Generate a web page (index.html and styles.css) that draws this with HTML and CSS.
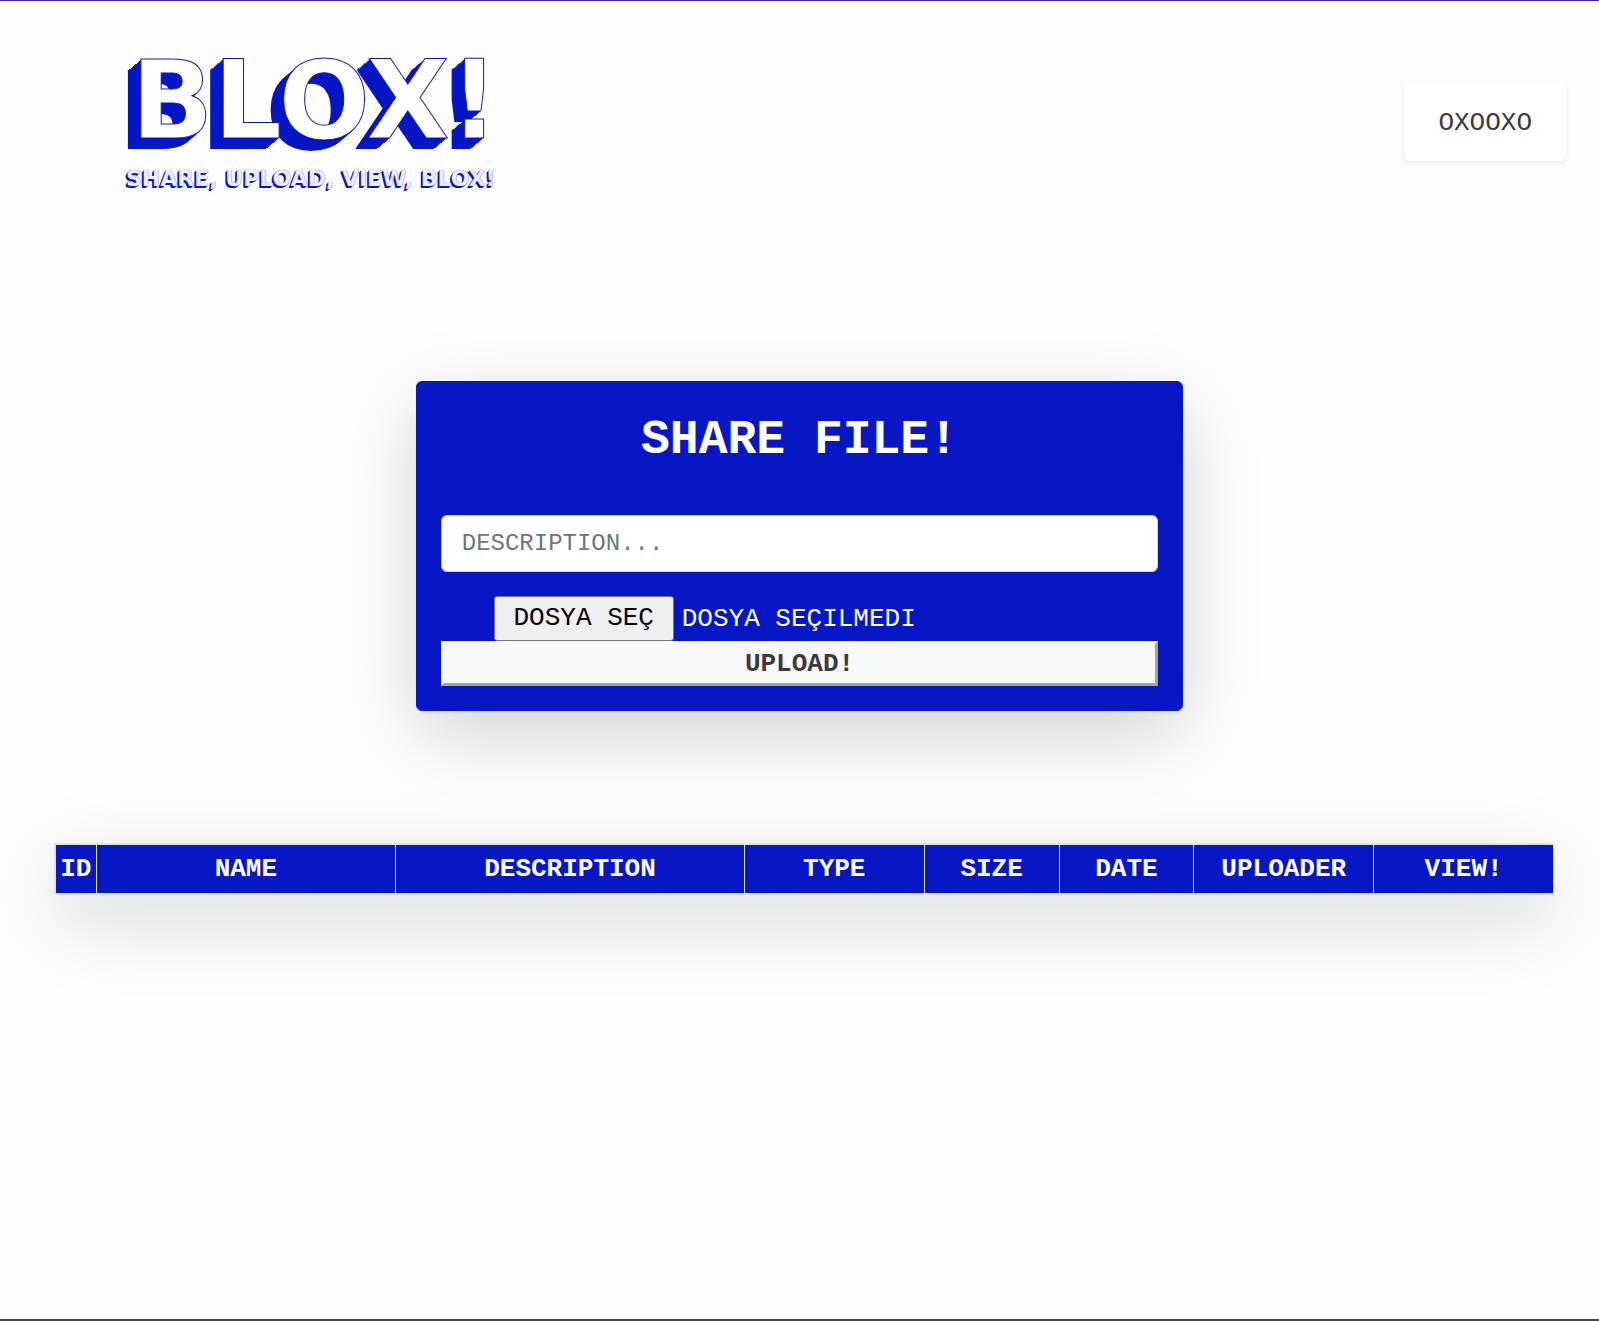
FILE: index.html
```html
<!DOCTYPE html>
<html lang="tr">
<head>
  <meta charset="utf-8">
  <meta name="viewport" content="width=device-width, initial-scale=1">
  <title>BLOX!</title>
  <link rel="stylesheet" href="styles.css">
</head>
<body>
  <header class="site-header">
    <a class="brand" href="#">
      <span class="brand-name">BLOX!</span>
      <span class="brand-tagline">SHARE, UPLOAD, VIEW, BLOX!</span>
    </a>
    <a class="user-card" href="#">OXOOXO</a>
  </header>

  <main>
    <form class="share-card">
      <h1 class="share-title">SHARE FILE!</h1>
      <input class="description" type="text" placeholder="DESCRIPTION..." aria-label="DESCRIPTION">
      <div class="file-row">
        <input class="file-input" type="file" id="file">
        <label class="file-button" for="file">DOSYA SEÇ</label>
        <span class="file-name">DOSYA SEÇILMEDI</span>
      </div>
      <button class="upload" type="submit">UPLOAD!</button>
    </form>

    <div class="files">
      <table class="files-table">
        <colgroup>
          <col class="col-id"><col class="col-name"><col class="col-description"><col class="col-medium">
          <col class="col-small"><col class="col-small"><col class="col-medium"><col class="col-medium">
        </colgroup>
        <thead>
          <tr>
            <th scope="col">ID</th>
            <th scope="col">NAME</th>
            <th scope="col">DESCRIPTION</th>
            <th scope="col">TYPE</th>
            <th scope="col">SIZE</th>
            <th scope="col">DATE</th>
            <th scope="col">UPLOADER</th>
            <th scope="col">VIEW!</th>
          </tr>
        </thead>
      </table>
    </div>
  </main>
</body>
</html>
```
FILE: styles.css
```css
:root {
  --blue: #0717c5;
  --ink: #3d3a3e;
  --line: #dee2e6;
  --deep-shadow: 0 24px 80px rgba(0, 0, 0, 0.175);
}

* {
  box-sizing: border-box;
}

body {
  margin: 0;
  min-height: 100vh;
  border-top: 1px solid #3a22a8;
  border-bottom: 2px solid #444;
  background: #fefefe;
  color: var(--ink);
  font: 26px/36px "Liberation Mono", monospace;
}

.site-header {
  display: flex;
  justify-content: space-between;
  align-items: center;
  padding: 50px 33px 46px 126px;
}

.brand {
  display: flex;
  flex-direction: column;
  gap: 16px;
  color: #fff;
  font-family: "DejaVu Sans", sans-serif;
  font-weight: 700;
  text-decoration: none;
  white-space: nowrap;
}

.brand-name {
  padding-left: 5px;
  font-size: 108px;
  line-height: 100px;
  -webkit-text-stroke: 1px var(--blue);
  text-shadow:
    -1px 1px var(--blue), -2px 2px var(--blue), -3px 3px var(--blue),
    -4px 4px var(--blue), -5px 5px var(--blue), -6px 5px var(--blue),
    -7px 6px var(--blue), -8px 7px var(--blue), -9px 8px var(--blue),
    -10px 9px var(--blue), -11px 10px var(--blue), -12px 10px var(--blue),
    -13px 11px var(--blue);
}

.brand-tagline {
  font-size: 22px;
  line-height: 24px;
  color: #eceefc;
  text-shadow: -1px 1px var(--blue), -2px 2px var(--blue), 0 0 1px var(--blue);
}

.user-card {
  padding: 24px 34px 20px;
  border-radius: 6px;
  background: #fff;
  box-shadow: 0 3px 6px rgba(0, 0, 0, 0.075);
  color: var(--ink);
  text-decoration: none;
}

.share-card {
  display: flex;
  flex-direction: column;
  width: 48%;
  margin: 144px auto 132px;
  padding: 28px 24px 24px;
  border: 1px solid var(--blue);
  border-radius: 6px;
  background: var(--blue);
  box-shadow: var(--deep-shadow);
}

.share-title {
  margin: 0 0 45px;
  color: #fff;
  font-size: 48px;
  line-height: 60px;
  text-align: center;
}

.description {
  width: 100%;
  height: 57px;
  margin-bottom: 24px;
  padding: 0 20px;
  border: 1px solid #ced4da;
  border-radius: 6px;
  background: #fff;
  color: var(--ink);
  font-family: inherit;
  font-size: 24px;
}

.description::placeholder {
  color: #6c757d;
  opacity: 1;
}

.file-row {
  display: flex;
  align-items: center;
  gap: 8px;
  padding-left: 53px;
  color: #fff;
}

.file-input {
  position: absolute;
  width: 1px;
  height: 1px;
  opacity: 0;
}

.file-button {
  width: 180px;
  padding: 4px 0;
  border: 1px solid #767676;
  border-radius: 3px;
  background: #efefef;
  color: #000;
  line-height: 35px;
  text-align: center;
}

.upload {
  height: 45px;
  padding: 0;
  border: 3px solid;
  border-color: #f8f9fa #a4a5a5 #a4a5a5 #f8f9fa;
  background: #f8f9fa;
  color: var(--ink);
  font: inherit;
  font-weight: 700;
}

.files {
  padding: 0 45px 0 54px;
}

.files-table {
  width: 100%;
  table-layout: fixed;
  border-collapse: collapse;
  border: 2px solid var(--line);
  border-right-width: 1px;
  background: var(--blue);
  box-shadow: var(--deep-shadow);
  color: #fff;
}

.files-table th {
  padding: 6px 0;
}

.files-table th + th {
  border-left: 1px solid var(--line);
}

.col-id { width: 41px; }
.col-name { width: 20%; }
.col-medium { width: 12%; }
.col-small { width: 9%; }
```
